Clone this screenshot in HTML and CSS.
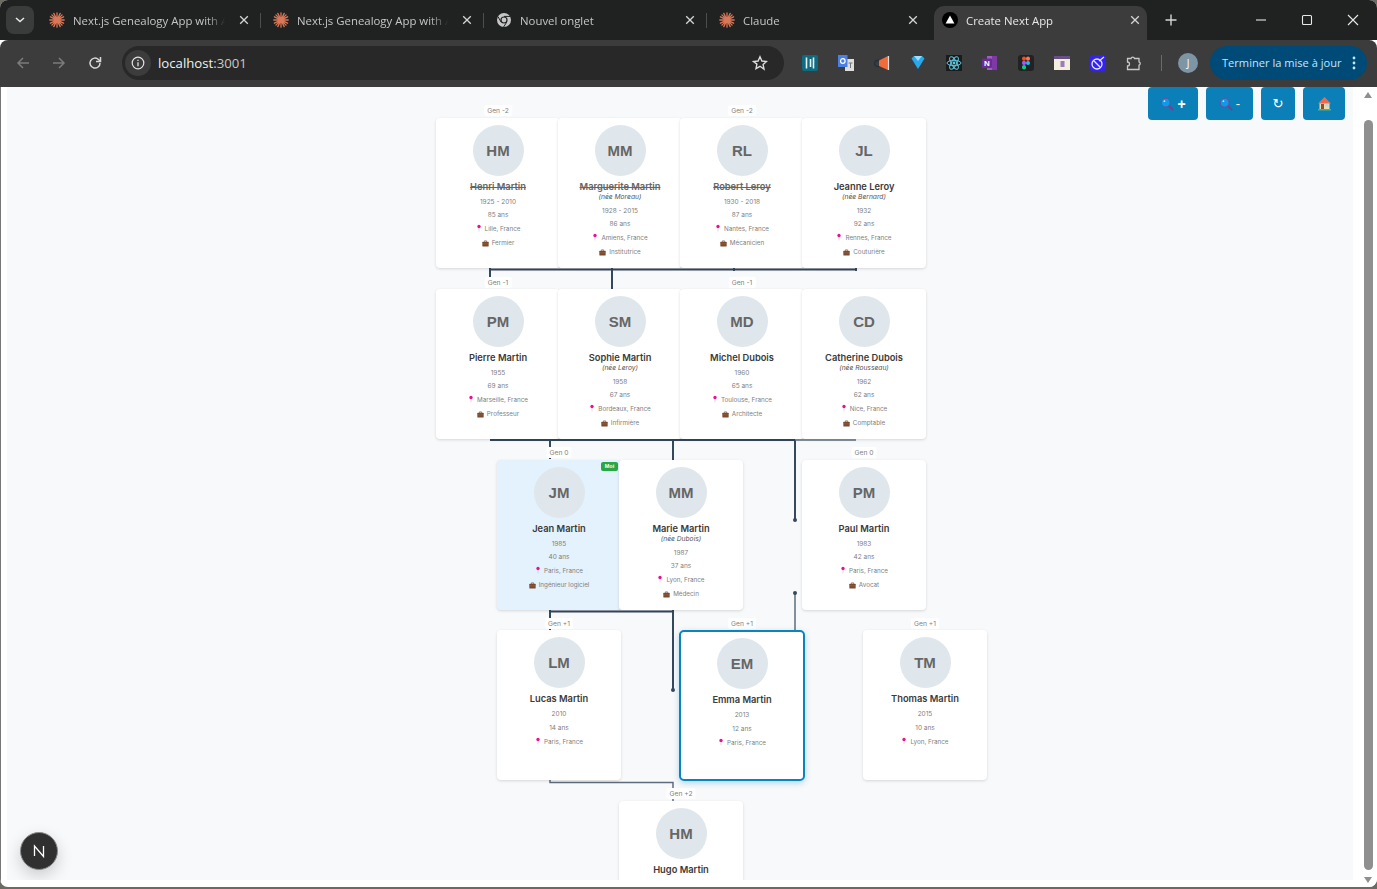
FILE: index.html
```html
<!DOCTYPE html>
<html lang="fr">
<head>
<meta charset="utf-8">
<title>Create Next App</title>
<link rel="stylesheet" href="styles.css">
</head>
<body>
<svg class="defs" width="0" height="0" aria-hidden="true">
  <symbol id="claude" viewBox="0 0 16 16"><g stroke="#d97757" stroke-width="1.300" stroke-linecap="round"><path d="M8 .8v14.400M.8 8h14.400M2.900 2.900l10.200 10.200M13.100 2.900L2.900 13.100M4.800 1.400l6.400 13.200M11.200 1.400L4.800 14.600M1.400 4.800l13.200 6.400M14.600 4.800L1.400 11.200"/></g><circle cx="8" cy="8" r="2.800" fill="#d97757"/></symbol>
  <symbol id="close" viewBox="0 0 10 10"><path d="M1.200 1.200l7.600 7.600M8.800 1.200L1.200 8.800" stroke="#d5d5d5" stroke-width="1.300" fill="none"/></symbol>
  <symbol id="pin" viewBox="0 0 8 10"><path d="M4 4.500V9.500" stroke="#c9c9c9" stroke-width=".9"/><circle cx="4" cy="3" r="2.200" fill="#ec0f8f"/></symbol>
  <symbol id="job" viewBox="0 0 8 8"><rect x=".4" y="2" width="7.200" height="5.400" rx=".6" fill="#7b4a2e"/><path d="M2.800 2V1h2.400v1" fill="none" stroke="#5a3722" stroke-width=".7"/><path d="M.4 4.400h7.200" stroke="#a5744f" stroke-width=".5"/></symbol>
  <symbol id="loupe" viewBox="0 0 14 14"><path d="M8.500 8.500l4.200 4.200" stroke="#7b3f8f" stroke-width="1.800" stroke-linecap="round"/><circle cx="5.700" cy="5.700" r="4.400" fill="#0b9be8" stroke="#6a4fa0" stroke-width="1"/><circle cx="4.400" cy="4.200" r=".9" fill="#bfe8ff"/></symbol>
</svg>

<div class="window">
  <header class="tabstrip">
    <button class="tabsearch"><svg width="10" height="6" viewBox="0 0 10 6"><path d="M1 1l4 3.600L9 1" fill="none" stroke="#e8e8e8" stroke-width="1.500"/></svg></button>
    <div class="tab"><svg class="favicon"><use href="#claude"/></svg><span class="tabtitle">Next.js Genealogy App with A</span><svg class="tabclose"><use href="#close"/></svg></div>
    <div class="tab"><svg class="favicon"><use href="#claude"/></svg><span class="tabtitle">Next.js Genealogy App with A</span><svg class="tabclose"><use href="#close"/></svg></div>
    <div class="tab"><svg class="favicon" viewBox="0 0 16 16"><circle cx="8" cy="8" r="7" fill="#c7c7c7"/><circle cx="8" cy="8" r="3.600" fill="#202121"/><circle cx="8" cy="8" r="2.400" fill="#c7c7c7"/><path d="M8 4.400h6M5 10L2 4.600M10.600 10.400L7.600 15" stroke="#202121" stroke-width="1"/></svg><span class="tabtitle">Nouvel onglet</span><svg class="tabclose"><use href="#close"/></svg></div>
    <div class="tab tab-last"><svg class="favicon"><use href="#claude"/></svg><span class="tabtitle">Claude</span><svg class="tabclose"><use href="#close"/></svg></div>
    <div class="tab tab-active"><svg class="favicon" viewBox="0 0 16 16"><circle cx="8" cy="8" r="8" fill="#000"/><path d="M8 3.600l4.400 7.800H3.600z" fill="#fff"/></svg><span class="tabtitle">Create Next App</span><svg class="tabclose"><use href="#close"/></svg></div>
    <svg class="newtab" width="12" height="12" viewBox="0 0 12 12"><path d="M6 .5v11M.5 6h11" stroke="#d5d5d5" stroke-width="1.400"/></svg>
    <div class="winctrls">
      <svg width="12" height="12" viewBox="0 0 12 12"><path d="M1 6h10" stroke="#e8e8e8" stroke-width="1.100"/></svg>
      <svg width="12" height="12" viewBox="0 0 12 12"><rect x="1.500" y="1.500" width="9" height="9" rx="1" fill="none" stroke="#e8e8e8" stroke-width="1.100"/></svg>
      <svg width="12" height="12" viewBox="0 0 12 12"><path d="M1 1l10 10M11 1L1 11" stroke="#e8e8e8" stroke-width="1.100"/></svg>
    </div>
  </header>

  <nav class="toolbar">
    <svg class="navicon" viewBox="0 0 16 16"><path d="M14 8H3M8 3L3 8l5 5" fill="none" stroke="#7b7b7b" stroke-width="1.500"/></svg>
    <svg class="navicon" viewBox="0 0 16 16"><path d="M2 8h11M8 3l5 5-5 5" fill="none" stroke="#7b7b7b" stroke-width="1.500"/></svg>
    <svg class="navicon" viewBox="0 0 16 16"><path d="M13 8a5 5 0 1 1-1.500-3.500L13 6" fill="none" stroke="#d8d8d8" stroke-width="1.500"/><path d="M13.500 2v4.500H9" fill="none" stroke="#d8d8d8" stroke-width="1.500"/></svg>
    <div class="omnibox">
      <span class="siteinfo"><svg width="14" height="14" viewBox="0 0 14 14"><circle cx="7" cy="7" r="5.800" fill="none" stroke="#e3e3e3" stroke-width="1.200"/><path d="M7 6.200v4M7 3.800v1.300" stroke="#e3e3e3" stroke-width="1.300"/></svg></span>
      <span class="url">localhost<span class="port">:3001</span></span>
      <svg class="star" width="16" height="16" viewBox="0 0 16 16"><path d="M8 1.800l1.900 4.200 4.600.5-3.400 3.100.9 4.500L8 11.300l-4 2.300.9-4.500L1.500 6.500l4.600-.5z" fill="none" stroke="#dcdcdc" stroke-width="1.400"/></svg>
    </div>
    <div class="extensions">
      <svg class="ext" viewBox="0 0 16 16"><rect width="16" height="16" rx="2" fill="#0f6c80"/><path d="M4.500 2.500v11M8.500 4v8M11.500 2.500v11" stroke="#e6f4f7" stroke-width="1.600"/></svg>
      <svg class="ext" viewBox="0 0 16 16"><path d="M7 4h9v12H7z" fill="#dedede"/><path d="M0 0h9.500v12H0z" fill="#4a7fe5"/><circle cx="4.800" cy="6" r="2.300" fill="none" stroke="#fff" stroke-width="1.200"/><path d="M10.500 8h4M12.500 8v5" stroke="#777" stroke-width="1"/></svg>
      <svg class="ext" viewBox="0 0 16 16"><rect x=".5" y="5.500" width="7" height="6" rx="3" fill="none" stroke="#24303d" stroke-width="1.400"/><path d="M5 5.500L14 1v14L5 11z" fill="#f26b3a"/><path d="M14.500 1v14" stroke="#ddd" stroke-width="1.200"/></svg>
      <svg class="ext" viewBox="0 0 16 16"><path d="M1.500 3.500L4 1h8l2.500 2.500L8 14z" fill="#27a9f0"/><path d="M4 1h8L8 6z" fill="#9de0ff"/><path d="M8 14l-1 2h2z" fill="#154a6a"/></svg>
      <svg class="ext" viewBox="0 0 16 16"><rect width="16" height="16" fill="#1b1b1b"/><g fill="none" stroke="#61c8e0" stroke-width="1"><ellipse cx="8" cy="8" rx="7" ry="2.700"/><ellipse cx="8" cy="8" rx="7" ry="2.700" transform="rotate(60 8 8)"/><ellipse cx="8" cy="8" rx="7" ry="2.700" transform="rotate(120 8 8)"/></g><circle cx="8" cy="8" r="1.400" fill="#61c8e0"/></svg>
      <svg class="ext" viewBox="0 0 16 16"><path d="M5 1h10v14H5z" fill="#a55ac8"/><path d="M10 1h5v14h-5z" fill="#7d3aa5"/><rect y="3.500" width="10" height="9.500" rx="1" fill="#6d2b96"/><text class="ext-n" x="5" y="11" text-anchor="middle">N</text></svg>
      <svg class="ext" viewBox="0 0 16 16"><rect width="16" height="16" rx="3" fill="#222"/><rect x="4" y="1.500" width="4" height="4.300" rx="2" fill="#f24e1e"/><rect x="8" y="1.500" width="4" height="4.300" rx="2" fill="#ff7262"/><rect x="4" y="5.800" width="4" height="4.300" rx="2" fill="#a259ff"/><circle cx="10" cy="8" r="2" fill="#1abcfe"/><rect x="4" y="10.100" width="4" height="4.300" rx="2" fill="#0acf83"/></svg>
      <svg class="ext" viewBox="0 0 16 16"><rect y="1" width="16" height="14" fill="#f3eedd"/><rect y="1" width="16" height="3" fill="#6a4f86"/><rect x="6.500" y="6" width="4" height="6" fill="#9a7bbd"/></svg>
      <svg class="ext" viewBox="0 0 16 16"><rect width="16" height="16" rx="3" fill="#3322f0"/><circle cx="7" cy="9" r="5" fill="none" stroke="#e8e8ff" stroke-width="1.300"/><path d="M4 6l6 6M9 6l5-4" stroke="#e8e8ff" stroke-width="1.300"/></svg>
      <svg class="ext" viewBox="0 0 16 16"><path d="M1.500 3.500h3.500a1.800 1.800 0 0 1 3.500 0h4.500v3.300a1.800 1.800 0 0 1 0 3.400v4.300H1.500v-3.500a2 2 0 0 0 0-4z" fill="none" stroke="#c8c8c8" stroke-width="1.300"/></svg>
    </div>
    <span class="toolsep"></span>
    <span class="profile">J</span>
    <div class="update"><span class="update-label">Terminer la mise à jour</span><svg width="4" height="14" viewBox="0 0 4 14"><circle cx="2" cy="2" r="1.400" fill="#c2e7ff"/><circle cx="2" cy="7" r="1.400" fill="#c2e7ff"/><circle cx="2" cy="12" r="1.400" fill="#c2e7ff"/></svg></div>
  </nav>

  <div class="viewport">
    <main class="canvas">
      <svg class="links" width="1346" height="793" viewBox="7 87 1346 793">
        <g class="link-strong">
          <path d="M490 268V288M612 268V289M734 268V271M856 268V271M490 269.500H856"/>
          <path d="M490 440H795M550 440V459M673 440V460M795 440V520M612 437V440M734 437V440"/>
          <path d="M550 609V630M550 611.500H673M673 610V690"/>
        </g>
        <g class="link-soft">
          <path d="M795 440H856M795 593V630"/>
          <path d="M550 780V782.500H673V801"/>
        </g>
        <circle class="link-dot" cx="795" cy="520" r="2"/>
        <circle class="link-dot" cx="795" cy="593" r="2"/>
        <circle class="link-dot" cx="673" cy="690" r="2"/>
      </svg>

      <span class="gen g1">Gen -2</span><span class="gen g2">Gen -2</span>
      <span class="gen g3">Gen -1</span><span class="gen g4">Gen -1</span>
      <span class="gen g5">Gen 0</span><span class="gen g6">Gen 0</span>
      <span class="gen g7">Gen +1</span><span class="gen g8">Gen +1</span><span class="gen g9">Gen +1</span>
      <span class="gen g10">Gen +2</span>

      <article class="card r1 xa">
        <div class="avatar">HM</div><div class="name dead">Henri Martin</div>
        <div class="meta">1925 - 2010</div><div class="meta">85 ans</div>
        <div class="info first"><svg class="pin"><use href="#pin"/></svg>Lille, France</div>
        <div class="info"><svg class="job"><use href="#job"/></svg>Fermier</div>
      </article>
      <article class="card r1 xb">
        <div class="avatar">MM</div><div class="name dead">Marguerite Martin</div><div class="maiden">(née Moreau)</div>
        <div class="meta">1928 - 2015</div><div class="meta">86 ans</div>
        <div class="info first"><svg class="pin"><use href="#pin"/></svg>Amiens, France</div>
        <div class="info"><svg class="job"><use href="#job"/></svg>Institutrice</div>
      </article>
      <article class="card r1 xc">
        <div class="avatar">RL</div><div class="name dead">Robert Leroy</div>
        <div class="meta">1930 - 2018</div><div class="meta">87 ans</div>
        <div class="info first"><svg class="pin"><use href="#pin"/></svg>Nantes, France</div>
        <div class="info"><svg class="job"><use href="#job"/></svg>Mécanicien</div>
      </article>
      <article class="card r1 xd">
        <div class="avatar">JL</div><div class="name">Jeanne Leroy</div><div class="maiden">(née Bernard)</div>
        <div class="meta">1932</div><div class="meta">92 ans</div>
        <div class="info first"><svg class="pin"><use href="#pin"/></svg>Rennes, France</div>
        <div class="info"><svg class="job"><use href="#job"/></svg>Couturière</div>
      </article>

      <article class="card r2 xa">
        <div class="avatar">PM</div><div class="name">Pierre Martin</div>
        <div class="meta">1955</div><div class="meta">69 ans</div>
        <div class="info first"><svg class="pin"><use href="#pin"/></svg>Marseille, France</div>
        <div class="info"><svg class="job"><use href="#job"/></svg>Professeur</div>
      </article>
      <article class="card r2 xb">
        <div class="avatar">SM</div><div class="name">Sophie Martin</div><div class="maiden">(née Leroy)</div>
        <div class="meta">1958</div><div class="meta">67 ans</div>
        <div class="info first"><svg class="pin"><use href="#pin"/></svg>Bordeaux, France</div>
        <div class="info"><svg class="job"><use href="#job"/></svg>Infirmière</div>
      </article>
      <article class="card r2 xc">
        <div class="avatar">MD</div><div class="name">Michel Dubois</div>
        <div class="meta">1960</div><div class="meta">65 ans</div>
        <div class="info first"><svg class="pin"><use href="#pin"/></svg>Toulouse, France</div>
        <div class="info"><svg class="job"><use href="#job"/></svg>Architecte</div>
      </article>
      <article class="card r2 xd">
        <div class="avatar">CD</div><div class="name">Catherine Dubois</div><div class="maiden">(née Rousseau)</div>
        <div class="meta">1962</div><div class="meta">62 ans</div>
        <div class="info first"><svg class="pin"><use href="#pin"/></svg>Nice, France</div>
        <div class="info"><svg class="job"><use href="#job"/></svg>Comptable</div>
      </article>

      <article class="card r3 xe self">
        <span class="moi">Moi</span>
        <div class="avatar">JM</div><div class="name">Jean Martin</div>
        <div class="meta">1985</div><div class="meta">40 ans</div>
        <div class="info first"><svg class="pin"><use href="#pin"/></svg>Paris, France</div>
        <div class="info"><svg class="job"><use href="#job"/></svg>Ingénieur logiciel</div>
      </article>
      <article class="card r3 xf">
        <div class="avatar">MM</div><div class="name">Marie Martin</div><div class="maiden">(née Dubois)</div>
        <div class="meta">1987</div><div class="meta">37 ans</div>
        <div class="info first"><svg class="pin"><use href="#pin"/></svg>Lyon, France</div>
        <div class="info"><svg class="job"><use href="#job"/></svg>Médecin</div>
      </article>
      <article class="card r3 xd">
        <div class="avatar">PM</div><div class="name">Paul Martin</div>
        <div class="meta">1983</div><div class="meta">42 ans</div>
        <div class="info first"><svg class="pin"><use href="#pin"/></svg>Paris, France</div>
        <div class="info"><svg class="job"><use href="#job"/></svg>Avocat</div>
      </article>

      <article class="card r4 xe">
        <div class="avatar">LM</div><div class="name">Lucas Martin</div>
        <div class="meta">2010</div><div class="meta">14 ans</div>
        <div class="info first"><svg class="pin"><use href="#pin"/></svg>Paris, France</div>
      </article>
      <article class="card r4 xc selected">
        <div class="avatar">EM</div><div class="name">Emma Martin</div>
        <div class="meta">2013</div><div class="meta">12 ans</div>
        <div class="info first"><svg class="pin"><use href="#pin"/></svg>Paris, France</div>
      </article>
      <article class="card r4 xg">
        <div class="avatar">TM</div><div class="name">Thomas Martin</div>
        <div class="meta">2015</div><div class="meta">10 ans</div>
        <div class="info first"><svg class="pin"><use href="#pin"/></svg>Lyon, France</div>
      </article>

      <article class="card r5 xf">
        <div class="avatar">HM</div><div class="name">Hugo Martin</div>
      </article>

      <div class="controls">
        <button class="ctrl c-in"><svg class="loupe"><use href="#loupe"/></svg><span class="sign">+</span></button>
        <button class="ctrl c-out"><svg class="loupe"><use href="#loupe"/></svg><span class="sign-thin">-</span></button>
        <button class="ctrl c-reset">↻</button>
        <button class="ctrl c-home"><svg width="15" height="15" viewBox="0 0 15 15"><rect x="2.500" y="6.500" width="10" height="6.500" fill="#f2d9a8"/><path d="M7.500 1L1 7.500h13z" fill="#ef6a4a"/><rect x="4" y="8" width="3" height="5" fill="#8a4f33"/><rect x="8.500" y="8" width="3" height="2.500" fill="#9fdcf5"/><rect x="1" y="13" width="13" height="1.500" fill="#4fb37a"/></svg></button>
      </div>

      <button class="devtools"><svg width="14" height="14" viewBox="0 0 14 14"><path d="M2.500 12V2l9 10.500V2" fill="none" stroke="#fff" stroke-width="1.300"/></svg></button>
    </main>
    <aside class="scrollbar">
      <span class="arrow-up"></span>
      <span class="thumb"></span>
      <span class="arrow-down"></span>
    </aside>
  </div>
</div>
<div class="desktop"></div>
</body>
</html>
```

FILE: styles.css
```css
* { box-sizing: border-box; }
html, body { margin: 0; height: 889px; overflow: hidden; }
body { background: #6b6b62; font-family: "Liberation Sans", Arial, sans-serif; }
button { font: inherit; border: 0; padding: 0; }
.defs { position: absolute; }

.window { height: 887px; display: flex; flex-direction: column; background: #fff; border-radius: 8px; overflow: hidden; }

/* tab strip */
.tabstrip { height: 40px; flex: none; background: #202121; display: flex; align-items: flex-end; padding-left: 6px; position: relative; }
.tabsearch { width: 28px; height: 28px; border-radius: 8px; background: #3a3b3b; margin: 0 4px 6px 0; display: flex; align-items: center; justify-content: center; }
.tab { width: 223px; height: 34px; display: flex; align-items: center; padding: 0 12px 6px 11px; color: #c4c7c5; font: 11.400px "Open Sans", sans-serif; position: relative; flex: none; }
.tab + .tab { padding-left: 12px; }
.tab::after { content: ""; position: absolute; right: 0; top: 7px; width: 1px; height: 15px; background: #4d4d4d; }
.tab-last::after, .tab-active::after { display: none; }
.tab.tab-active { width: 213px; margin-left: 4px; padding: 0 7px 6px 8px; background: #3c3c3c; color: #e8e8e8; border-radius: 10px 10px 0 0; }
.favicon { width: 16px; height: 16px; flex: none; margin-right: 8px; }
.tabtitle { flex: 1; min-width: 0; white-space: nowrap; overflow: hidden; -webkit-mask-image: linear-gradient(90deg, #000 88%, transparent); mask-image: linear-gradient(90deg, #000 88%, transparent); }
.tabclose { width: 10px; height: 10px; flex: none; margin-left: 14px; }
.newtab { margin: 14px 0 0 18px; align-self: flex-start; flex: none; }
.winctrls { margin-left: auto; margin-right: 18px; align-self: flex-start; margin-top: 14px; display: flex; gap: 34px; }

/* toolbar */
.toolbar { height: 47px; flex: none; background: #3c3c3c; display: flex; align-items: center; padding: 0 10px 1px 15px; border-radius: 8px 8px 0 0; }
.navicon { width: 16px; height: 16px; margin-right: 20px; flex: none; }
.omnibox { width: 662px; height: 34px; margin-left: -1px; flex: none; background: #282828; border-radius: 17px; display: flex; align-items: center; padding: 0 16px 0 3px; color: #fff; }
.siteinfo { width: 26px; height: 26px; border-radius: 50%; background: #3c3c3c; display: flex; align-items: center; justify-content: center; }
.url { margin-left: 7px; font: 13.200px "Open Sans", sans-serif; flex: 1; color: #f1f1f1; }
.port { color: #c8c8c8; }
.extensions { display: flex; gap: 20px; margin-left: 18px; align-items: center; flex: none; }
.ext { width: 16px; height: 16px; flex: none; display: block; }
.ext-n { fill: #fff; font: 700 8px "Liberation Sans", sans-serif; }
.toolsep { width: 1px; height: 16px; background: #6a6a6a; margin: 0 16px 0 19px; flex: none; }
.profile { width: 20px; height: 20px; border-radius: 50%; background: #7e95a5; color: #fff; font: 10px "Open Sans", sans-serif; display: flex; align-items: center; justify-content: center; flex: none; }
.update { margin-left: 12px; width: 157px; height: 34px; flex: none; border-radius: 17px; background: #004a77; color: #c2e7ff; font: 11.100px "Open Sans", sans-serif; display: flex; align-items: center; justify-content: space-between; padding: 0 11px 0 12px; white-space: nowrap; }
.update-label { padding-bottom: 2px; }

/* viewport */
.viewport { flex: 1; min-height: 0; display: flex; padding-left: 6px; border-left: 1px solid #777; }
.canvas { flex: none; width: 1346px; height: 793px; background: #f8f9fa; position: relative; overflow: hidden; }
.links { position: absolute; left: 0; top: 0; }
.links path { fill: none; stroke-width: 2; }
.link-strong path { stroke: #34495e; }
.link-soft path { stroke: #5d6d7e; stroke-width: 1.500; }
.link-dot { fill: #34495e; }

/* cards: nodes on a free canvas */
.card { position: absolute; width: 124px; height: 150px; background: #fff; border-radius: 4px; padding-top: 7px; box-shadow: 0 1px 3px rgba(0,0,0,.14); text-align: center; color: #808080; }
.r1 { top: 31px; } .r2 { top: 202px; } .r3 { top: 373px; } .r4 { top: 543px; } .r5 { top: 714px; }
.xa { left: 429px; } .xb { left: 551px; } .xc { left: 673px; } .xd { left: 795px; }
.xe { left: 490px; } .xf { left: 612px; } .xg { left: 856px; }
.self { background: #e3f2fd; }
.selected { width: 126px; height: 151px; margin-left: -1px; border: 2px solid #0a84c1; border-radius: 5px; padding-top: 6px; box-shadow: 0 2px 6px rgba(10,132,193,.3); z-index: 3; }
.avatar { width: 51px; height: 51px; border-radius: 50%; background: #dfe6ec; color: #666; font-weight: 700; font-size: 15px; line-height: 51px; margin: 0 auto; }
.name { margin-top: 5px; font: 600 9.300px/12px Inter, "Liberation Sans", sans-serif; color: #3a3a3a; white-space: nowrap; }
.dead { color: #666; text-decoration: line-through; }
.maiden { font: italic 6.700px/8px Inter, sans-serif; color: #555; margin-bottom: 4px; }
.meta { font: 6.500px/13px Inter, sans-serif; color: #808080; }
.r4 .meta { line-height: 14px; }
.name + .meta { margin-top: 3px; }
.r4 .name + .meta { margin-top: 2px; }
.info { font: 6.300px/14px Inter, sans-serif; color: #808080; display: flex; align-items: center; justify-content: center; gap: 3px; white-space: nowrap; }
.pin { width: 6px; height: 8px; flex: none; margin-top: -2px; }
.job { width: 7px; height: 7px; flex: none; }
.moi { position: absolute; right: 3px; top: 2px; width: 17px; height: 9px; border-radius: 2px; background: #28a745; color: #fff; font: 700 5.500px/9px "Liberation Sans", sans-serif; }

.gen { position: absolute; height: 11px; padding: 0 3px; background: #fff; border-radius: 2px; font: 6.700px/12px Inter, sans-serif; color: #808080; transform: translateX(-50%); z-index: 2; white-space: nowrap; }
.g1 { left: 491px; top: 18px; } .g2 { left: 735px; top: 18px; }
.g3 { left: 491px; top: 190px; } .g4 { left: 735px; top: 190px; }
.g5 { left: 552px; top: 360px; } .g6 { left: 857px; top: 360px; }
.g7 { left: 552px; top: 531px; } .g8 { left: 735px; top: 531px; } .g9 { left: 918px; top: 531px; }
.g10 { left: 674px; top: 701px; }

/* zoom controls */
.controls { position: absolute; top: 0; right: 8px; display: flex; gap: 8px; z-index: 5; }
.ctrl { height: 33px; background: #0a7fb8; color: #fff; border-radius: 4px; font: 400 12px "Liberation Sans", sans-serif; display: flex; align-items: center; justify-content: center; gap: 3px; }
.c-in { width: 50px; } .c-out { width: 47px; } .c-reset { width: 34px; font: 13px "DejaVu Sans", sans-serif; } .c-home { width: 42px; }
.sign { font-size: 14px; font-weight: 700; }
.sign-thin { font-size: 13px; }
.loupe { width: 14px; height: 14px; }

.devtools { position: absolute; left: 13px; bottom: 10px; width: 38px; height: 38px; border-radius: 50%; background: #303030; border: 1px solid #8a8a8a; box-shadow: 0 6px 16px rgba(0,0,0,.18); display: flex; align-items: center; justify-content: center; z-index: 6; }

/* scrollbar */
.scrollbar { flex: 1; background: #fff; display: flex; flex-direction: column; align-items: flex-start; padding: 5px 0 0 11px; }
.arrow-up { width: 0; height: 0; border: 4.500px solid transparent; border-top: 0; border-bottom: 6px solid #8f8f8f; }
.thumb { width: 9px; height: 750px; flex: none; border-radius: 5px; background: #8f8f8f; margin: 22px 0 7px; }
.arrow-down { width: 0; height: 0; border: 4.500px solid transparent; border-bottom: 0; border-top: 6px solid #8f8f8f; }

.desktop { height: 2px; background: #6b6b62; }
```
